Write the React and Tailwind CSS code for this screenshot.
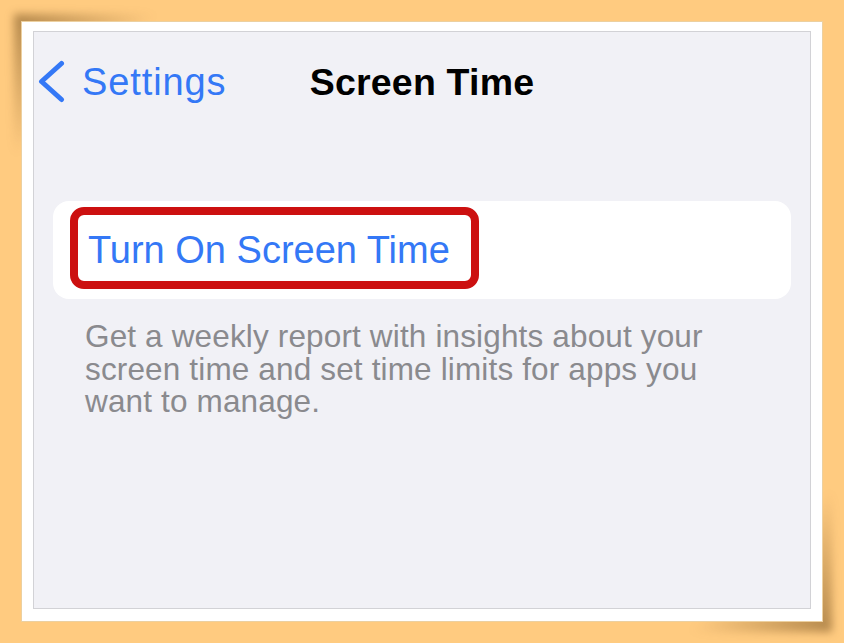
export default function App() {
  return (
    <div
      className="min-h-[643px] w-full bg-[#ffcb80] pt-[21px] pl-[21px]"
      style={{ fontFamily: '"Liberation Sans", Arial, sans-serif' }}
    >
      <div className="relative w-[802px] h-[601px]">
        {/* curled page shadows */}
        <div className="absolute -left-[7px] -top-[7px] w-[150px] h-[170px] bg-[linear-gradient(135deg,rgba(100,65,20,0.5),rgba(100,65,20,0)_45%)] blur-[4px]" />
        <div className="absolute -right-[9px] -bottom-[10px] w-[180px] h-[140px] bg-[linear-gradient(315deg,rgba(100,65,20,0.5),rgba(100,65,20,0)_45%)] blur-[4px]" />

        <div className="relative h-full bg-white border border-[#ecd0a0] pt-[9px] pl-[11px] pr-[11px] pb-[12px]">
          <div className="h-full bg-[#f1f1f6] border border-[#d2d2d6] px-[19px] pt-[27px]">
            {/* nav bar */}
            <div className="grid grid-cols-[1fr_auto_1fr] items-center h-[46px] -mx-[19px]">
              <div className="flex items-center">
                <svg width="28" height="44" viewBox="0 0 28 44" className="ml-[4px]">
                  <path
                    d="M23.5 3.5 L3.5 21.5 L23.5 39.5"
                    fill="none"
                    stroke="#3478f6"
                    strokeWidth="5"
                    strokeLinecap="round"
                    strokeLinejoin="round"
                  />
                </svg>
                <span className="ml-[16px] text-[38px] leading-[46px] tracking-[0.9px] text-[#3478f6]">
                  Settings
                </span>
              </div>
              <h1 className="text-[37.5px] leading-[46px] font-bold tracking-[0.2px] text-black">Screen Time</h1>
              <div />
            </div>

            {/* card */}
            <div className="relative mt-[96px] h-[98px] rounded-[16px] bg-white flex items-center pl-[35px]">
              <span className="text-[38px] leading-[46px] text-[#3478f6]">Turn On Screen Time</span>
              <div className="absolute left-[17px] top-[6px] w-[409px] h-[82px] rounded-[14px] border-[8px] border-[#cc1010]" />
            </div>

            <p className="mt-[21px] ml-[32px] w-[680px] text-[31.5px] leading-[32.5px] tracking-[0.15px] text-[#8a8a8e]">
              Get a weekly report with insights about your screen time and set time limits for apps you want to manage.
            </p>
          </div>
        </div>
      </div>
    </div>
  );
}
